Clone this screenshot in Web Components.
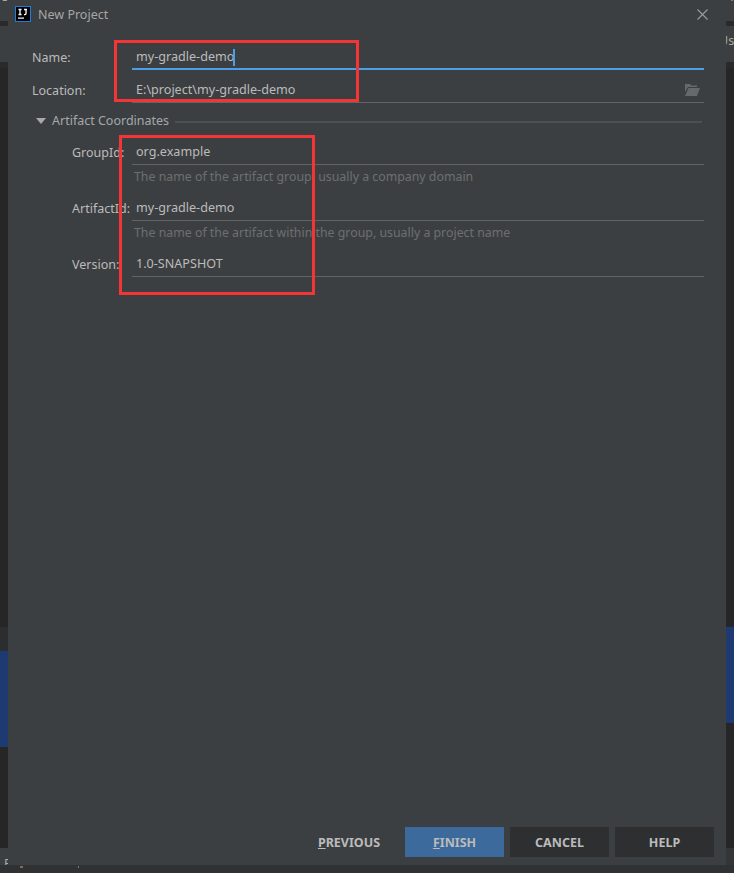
<!DOCTYPE html>
<html><head><meta charset="utf-8"><style>
html,body{margin:0;padding:0;height:100%;background:#2b2b2b;overflow:hidden}
body{font-family:"Noto Sans","Noto Sans CJK SC",sans-serif}
</style></head><body>
<ide-window></ide-window>
<script>
const FONT='"Noto Sans","Noto Sans CJK SC",sans-serif';
class IdeField extends HTMLElement{
  connectedCallback(){
    const s=this.attachShadow({mode:'open'});
    const focus=this.hasAttribute('focused');
    s.innerHTML=`<style>
    :host{display:grid;grid-template-columns:var(--label-w,100px) 1fr;height:28px;font:12.5px/18px ${FONT};color:#bbb}
    .l{align-self:center;padding-top:4px;white-space:nowrap}
    .f{display:flex;align-items:center;justify-content:space-between;padding:${focus?4:3}px 4px 0 4px;font-size:12.6px;border-bottom:${focus?'2px solid #4a9fe8':'1px solid #646464'};white-space:nowrap;color:#bbb}
    .caret{display:inline-block;width:2px;height:17px;background:#4a9fe8;vertical-align:middle;margin-left:-1px}
    ::slotted(svg){display:block}
    </style><div class="l">${this.getAttribute('label')}</div><div class="f"><span>${this.getAttribute('value')}${focus?'<span class="caret"></span>':''}</span><slot></slot></div>`;
  }
}
customElements.define('ide-field',IdeField);
class IdeButton extends HTMLElement{
  connectedCallback(){
    const s=this.attachShadow({mode:'open'});
    const k=this.getAttribute('kind')||'dark';
    const bg={dark:'#2d2f30',primary:'#3d6a9c',flat:'transparent'}[k];
    s.innerHTML=`<style>
    :host{display:flex;align-items:center;justify-content:center;width:99px;height:30px;background:${bg};color:#bbb;font:700 12.5px/18px ${FONT}}
    span{padding-top:1px}
    </style><span><slot></slot></span>`;
  }
}
customElements.define('ide-button',IdeButton);
class IdeDialog extends HTMLElement{
  connectedCallback(){
    const s=this.attachShadow({mode:'open'});
    s.innerHTML=`<style>
    :host{display:flex;flex-direction:column;position:absolute;left:8px;top:0;width:718px;height:865px;background:#3c3f41;font:12.5px/18px ${FONT};color:#bbb}
    .title{display:flex;align-items:center;height:30px;padding-left:7px;gap:7px;flex:none}
    .title span{color:#a6a6a6;font-size:12.5px}
    .title svg{margin-top:-2px}
    .x{margin-left:auto;margin-right:18px}
    .form{padding:12px 22px 0 24px;--label-w:100px}
    .sec{display:flex;align-items:center;margin:6px 0 0 4px;height:24px;gap:6px}
    .sec i{display:block;width:0;height:0;border:5px solid transparent;border-top:6px solid #a9a9a9;border-bottom:0}
    .sec span{color:#a3a8ac}
    .sec b{flex:1;height:2px;background:#4d4f51;margin:2px 2px 0 0}
    .coords{padding:4px 0 0 40px;--label-w:60px}
    .hint{margin-left:60px;height:28px;padding:3px 0 0 2px;box-sizing:border-box;color:#6c6f71;white-space:nowrap;font-size:12.35px}
    .grow{flex:1}
    .actions{display:flex;justify-content:flex-end;gap:6px;padding:0 12px 8px 0}
    .prev{width:94px;margin-right:3px}
    </style>
    <div class="title"><svg width="16" height="16" viewBox="0 0 16 16"><rect x=".5" y=".5" width="15" height="15" fill="#000" stroke="#1a7de0"/><path d="M3.500 3.500h3M5 3.500v5M3.500 8.500h3M9 3.500h3M11 3.500v4.300q0 .8-1 .8H9" fill="none" stroke="#fff" stroke-width="1.300"/><rect x="3" y="11.500" width="6" height="1.200" fill="#fff"/></svg><span>New Project</span>
      <svg class="x" width="11" height="11" viewBox="0 0 11 11"><path d="M.5.500l10 10M10.500.500l-10 10" stroke="#9b9b9b" stroke-width="1.100"/></svg></div>
    <div class="form">
      <ide-field label="Name:" value="my-gradle-demo" focused></ide-field>
      <ide-field label="Location:" value="E:\\project\\my-gradle-demo" style="margin-top:5px"><svg width="15" height="12" viewBox="0 0 15 12"><path d="M0 0h5l1 1.500h6V3H3L0 8zM3.500 4H15l-3 8H0z" fill="#66696b"/></svg></ide-field>
      <div class="sec"><i></i><span>Artifact Coordinates</span><b></b></div>
      <div class="coords">
        <ide-field label="GroupId:" value="org.example"></ide-field>
        <div class="hint">The name of the artifact group, usually a company domain</div>
        <ide-field label="ArtifactId:" value="my-gradle-demo"></ide-field>
        <div class="hint">The name of the artifact within the group, usually a project name</div>
        <ide-field label="Version:" value="1.0-SNAPSHOT"></ide-field>
      </div>
    </div>
    <div class="grow"></div>
    <div class="actions">
      <ide-button kind="flat" class="prev"><u>P</u>REVIOUS</ide-button>
      <ide-button kind="primary"><u>F</u>INISH</ide-button>
      <ide-button>CANCEL</ide-button>
      <ide-button>HELP</ide-button>
    </div>`;
  }
}
customElements.define('ide-dialog',IdeDialog);
class IdeBackdrop extends HTMLElement{
  connectedCallback(){
    const s=this.attachShadow({mode:'open'});
    s.innerHTML=`<style>
    :host{display:grid;grid-template-columns:8px 1fr 8px;grid-template-rows:1fr 8px;height:100%;background:#262626;font:12.5px/14px ${FONT};color:#aaa}
    .col{display:flex;flex-direction:column;overflow:hidden}
    .col>div{flex:none;overflow:hidden;white-space:nowrap;box-sizing:border-box}
    .g{background:#3c3f41}.d{background:#2a2a2a}.k{background:#262626}.s{background:#2c2d2e}
    .blue{background:#1d3a72}
    .bar{grid-column:1/4;background:#2f3133;display:flex;align-items:flex-start}
    .bar i{display:block;height:2px;margin-top:1px}
    .up{margin-top:-10px}
    </style>
    <div class="col">
      <div class="g" style="height:21px;padding-left:2px"><div class="up">s</div></div>
      <div class="d" style="height:5px"></div>
      <div class="g" style="height:36px"></div>
      <div class="d" style="height:6px"></div>
      <div class="k" style="height:559px"></div>
      <div class="s" style="height:24px"></div>
      <div class="blue" style="height:96px"></div>
      <div class="k" style="height:101px"></div>
      <div class="g" style="height:17px;padding:9px 0 0 4px">P</div>
    </div>
    <div></div>
    <div class="col">
      <div class="g" style="height:21px;padding-left:2px"><div class="up">1.</div></div>
      <div class="d" style="height:5px"></div>
      <div class="g" style="height:36px;padding-top:8px;text-indent:-7px">Us</div>
      <div class="d" style="height:6px"></div>
      <div class="k" style="height:559px"></div>
      <div class="blue" style="height:96px"></div>
      <div class="k" style="height:125px"></div>
      <div style="height:17px;background:#333537"></div>
    </div>
    <div class="bar"><i style="width:3px;margin-left:20px;background:#8a6a4a"></i><i style="width:1px;margin-left:55px;background:#6f7a80"></i></div>`;
  }
}
customElements.define('ide-backdrop',IdeBackdrop);
class IdeWindow extends HTMLElement{
  connectedCallback(){
    const s=this.attachShadow({mode:'open'});
    s.innerHTML=`<style>
    :host{display:block;position:relative;width:734px;height:873px;overflow:hidden}
    .m{position:absolute;border:3px solid #f33535;box-sizing:border-box;pointer-events:none}
    </style>
    <ide-backdrop></ide-backdrop>
    <ide-dialog></ide-dialog>
    <div class="m" style="left:114px;top:40px;width:245px;height:62px"></div>
    <div class="m" style="left:119px;top:135px;width:196px;height:160px"></div>`;
  }
}
customElements.define('ide-window',IdeWindow);
</script></body></html>
